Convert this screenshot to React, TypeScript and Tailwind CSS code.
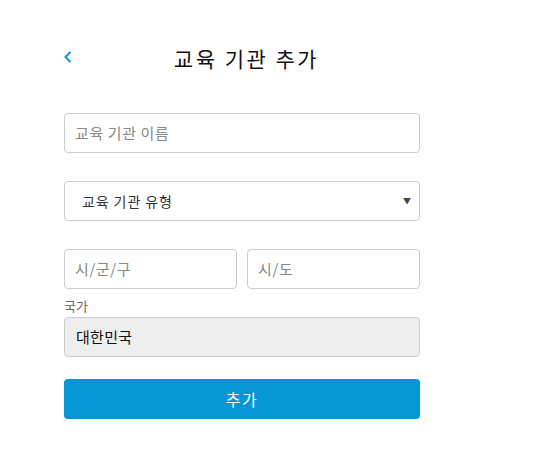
import React from "react";

export default function App() {
  return (
    <div className="w-[548px] h-[450px] bg-white" style={{ fontFamily: '"Noto Sans CJK KR", "Noto Sans", sans-serif' }}>
      <div className="ml-[64px] w-[356px] pt-[40px]">
        <div className="relative h-[36px] flex items-center justify-center">
          <svg className="absolute left-[-1px] top-[10px]" width="10" height="14" viewBox="0 0 10 14" fill="none">
            <path d="M7.5 2 L2.5 7 L7.5 12" stroke="#0a96d6" strokeWidth="2" />
          </svg>
          <span className="text-[21px] tracking-[2.5px] text-[#111] ml-[9px] leading-none">교육 기관 추가</span>
        </div>
        <div className="mt-[37px] h-[40px] border border-[#cccccc] rounded-[4px] flex items-center px-[10px] text-[15px] tracking-[0.6px] text-[#888]">
          교육 기관 이름
        </div>
        <div className="mt-[28px] h-[40px] border border-[#cccccc] rounded-[4px] flex items-center justify-between pl-[17px] pr-[7px] text-[14px] tracking-[0.9px] text-[#333]">
          <span>교육 기관 유형</span>
          <span className="text-[8px] text-[#444]">▼</span>
        </div>
        <div className="mt-[28px] flex gap-[10px]">
          <div className="flex-1 h-[40px] border border-[#cccccc] rounded-[4px] flex items-center px-[10px] text-[15px] tracking-[0.6px] text-[#888]">
            시/군/구
          </div>
          <div className="flex-1 h-[40px] border border-[#cccccc] rounded-[4px] flex items-center px-[10px] text-[15px] tracking-[0.6px] text-[#888]">
            시/도
          </div>
        </div>
        <div className="mt-[6px] h-[22px] text-[13px] text-[#666] leading-[22px]">국가</div>
        <div className="h-[40px] border border-[#cccccc] rounded-[4px] bg-[#eeeeee] flex items-center px-[11px] text-[15px] tracking-[0.3px] text-[#111]">
          대한민국
        </div>
        <button className="mt-[22px] w-full h-[40px] rounded-[4px] bg-[#0596d6] text-white text-[16px] tracking-[1.5px] flex items-center justify-center">
          추가
        </button>
      </div>
    </div>
  );
}
